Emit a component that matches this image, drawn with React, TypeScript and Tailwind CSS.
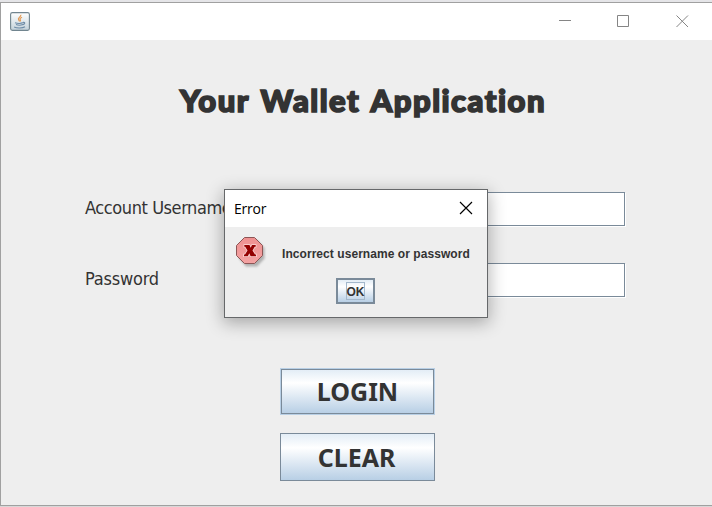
import React from "react";

function JavaIcon() {
  return (
    <svg width="20" height="20" viewBox="0 0 20 20" fill="none">
      <defs>
        <linearGradient id="cupTile" x1="0" y1="0" x2="0" y2="1">
          <stop offset="0" stopColor="#ffffff" />
          <stop offset="1" stopColor="#c3d2da" />
        </linearGradient>
      </defs>
      <rect x="0.6" y="0.6" width="18.8" height="17.8" rx="1.8" fill="url(#cupTile)" stroke="#71858f" strokeWidth="1.1" />
      <path d="M10.800 2.800c.7 2-3.600 3-2.200 5 .5.700.900 1 .800 1.700M12 5.200c-1.600.8-2.500 1.500-1.700 2.600.5.7.2 1.200-.2 1.700" stroke="#e39a55" strokeWidth="1.2" />
      <path d="M5 10.700c2.200.8 6.200.8 8.400-.1M6 12.600c2 .8 5 .8 6.800 0M13.200 10.400c2.200-.4 2 1.600-.4 2.300" stroke="#6d8ba6" strokeWidth="1.1" />
      <path d="M4.200 15c2.500 1.300 8.300 1.300 10.800-.2" stroke="#6d8ba6" strokeWidth="1.1" />
    </svg>
  );
}

function ErrorIcon() {
  return (
    <svg width="34" height="34" viewBox="0 0 34 34" className="block">
      <defs>
        <linearGradient id="errFill" x1="0" y1="0" x2="0" y2="1">
          <stop offset="0" stopColor="#ee9090" />
          <stop offset="1" stopColor="#f3a3a3" />
        </linearGradient>
        <filter id="errShadow" x="-20%" y="-20%" width="150%" height="150%">
          <feGaussianBlur stdDeviation="1.3" />
        </filter>
      </defs>
      <path d="M10 3h11l7.500 8v10.500l-7.500 8H10l-7-8V11z" fill="#888" opacity=".6" filter="url(#errShadow)" />
      <path d="M8.500.5h10l8 8v10l-8 8h-10l-8-8v-10z" fill="url(#errFill)" stroke="#8c5555" />
      <path
        d="M8.300 8h5.200l1.200 2.700L16 8h3.700v1.800h-1l-2.200 3.600 2.500 4h1v1.800h-5.400l-1.300-2.900-1.500 2.900H8v-1.800h1l2.500-3.800-2.300-3.800h-.9z"
        fill="#930000"
        stroke="#fbdada"
        strokeWidth="1.400"
        paintOrder="stroke"
      />
    </svg>
  );
}

function Field() {
  return (
    <div className="h-[34px] w-[185px] border border-[#7a8a99] bg-white shadow-[1px_1px_0_#fff]" />
  );
}

function ErrorDialog() {
  return (
    <div className="absolute left-[224px] top-[189px] flex h-[129px] w-[264px] flex-col border border-[#66686a] bg-[#eee] shadow-[0_4px_16px_1px_rgba(0,0,0,0.3)]">
      <div className="flex h-[37px] shrink-0 items-center justify-between bg-white pl-[9px] pr-[14px]">
        <span className="font-['Open_Sans',sans-serif] text-[14px] leading-5 tracking-[-0.200px] text-black">Error</span>
        <svg width="14" height="14" viewBox="0 0 14 14" className="mb-[2px] block">
          <path d="M1 1l12 12M13 1L1 13" stroke="#000" strokeWidth="1.150" />
        </svg>
      </div>
      <div className="flex h-[51px] pl-[11px] pt-[10px]">
        <ErrorIcon />
        <span className="ml-3 mt-[9px] whitespace-nowrap font-['Liberation_Sans',sans-serif] text-[12px] font-bold leading-4 tracking-[0.060px] text-[#333]">
          Incorrect username or password
        </span>
      </div>
      <button className="ml-[111px] flex h-[26px] w-[39px] shrink-0 items-center justify-center border-2 border-[#7a8a99] bg-linear-to-b from-[#e3edf6] via-[#ffffff] via-30% to-[#b8cfe5]">
        <span className="flex h-[18px] w-[19px] items-center justify-center border border-[#a3b8cc] pt-px font-['Liberation_Sans',sans-serif] text-[12px] font-bold text-[#333]">
          OK
        </span>
      </button>
    </div>
  );
}

export default function App() {
  return (
    <div className="relative h-[507px] w-[712px] overflow-hidden bg-[#d8d8d8]">
      <div className="h-[2px] bg-[#e5e5e8]" />
      <div className="flex h-[504px] flex-col border-y border-l border-[#a0a0a0] bg-[#eee]">
        <header className="flex h-[37px] shrink-0 items-center justify-between bg-white pl-[9px] pr-[23px]">
          <JavaIcon />
          <div className="flex items-center gap-[46px] text-[#858585]">
            <svg width="12" height="13" viewBox="0 0 12 13"><path d="M0 5.500h12" stroke="currentColor" /></svg>
            <svg width="13" height="13" viewBox="0 0 13 13"><path d="M.5.5h11v11H.5z" fill="none" stroke="currentColor" /></svg>
            <svg width="13" height="13" viewBox="0 0 13 13"><path d="M.5.5l11.500 11.500M12 .5L.5 12" stroke="currentColor" /></svg>
          </div>
        </header>
        <h1 className="ml-[179px] mt-[41px] whitespace-nowrap font-['Lato',sans-serif] text-[31px] font-black leading-[38px] tracking-[1.500px] text-[#333] [-webkit-text-stroke:1.700px_#333] [word-spacing:2.500px]">
          Your Wallet Application
        </h1>
        <div className="mt-[73px] flex items-center pl-[84px] font-['DejaVu_Sans_Condensed','DejaVu_Sans',sans-serif] text-[18px] text-[#333]">
          <label className="w-[355px] whitespace-nowrap pb-1 tracking-[-0.420px]">Account Username</label>
          <Field />
        </div>
        <div className="mt-[37px] flex items-center pl-[84px] font-['DejaVu_Sans_Condensed','DejaVu_Sans',sans-serif] text-[18px] text-[#333]">
          <label className="w-[355px] pb-1 tracking-[-0.200px]">Password</label>
          <Field />
        </div>
        <div className="ml-[279px] mt-[71px] flex w-[155px] flex-col gap-[18px] font-['Noto_Sans',sans-serif] text-[25px] font-bold text-[#333]">
          <button className="h-[47px] border border-[#b8cfe5] bg-[#7a8a99] p-px">
            <span className="flex h-full items-center justify-center bg-linear-to-b from-[#e3edf6] via-[#ffffff] via-30% to-[#b8cfe5]">LOGIN</span>
          </button>
          <button className="flex h-[48px] items-center justify-center border border-[#7a8a99] bg-linear-to-b from-[#e3edf6] via-[#ffffff] via-30% to-[#b8cfe5] pt-[2px] pr-[2px]">
            CLEAR
          </button>
        </div>
      </div>
      <ErrorDialog />
    </div>
  );
}
